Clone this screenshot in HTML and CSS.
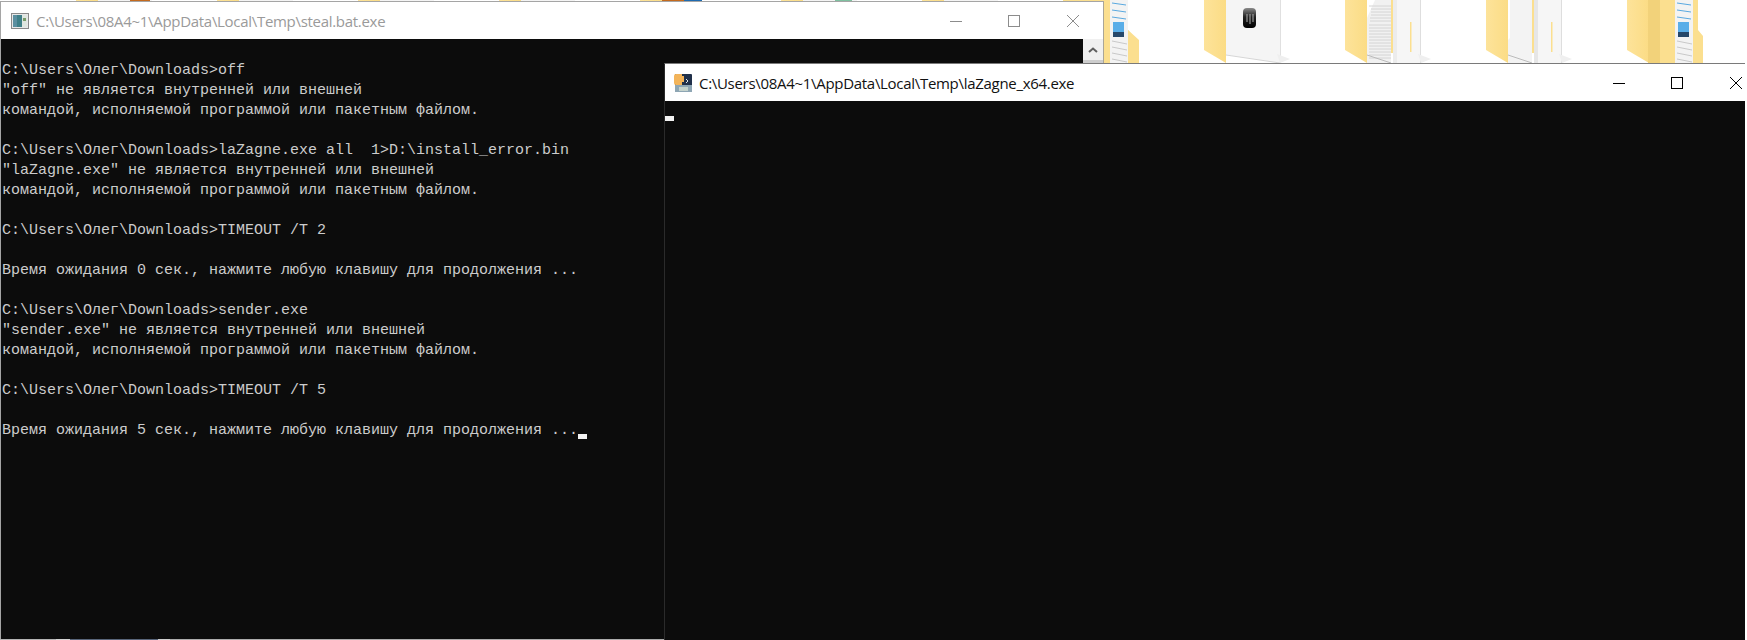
FILE: index.html
```html
<!DOCTYPE html>
<html lang="ru">
<head>
<meta charset="utf-8">
<title>steal.bat.exe</title>
<link rel="stylesheet" href="styles.css">
</head>
<body>
<svg class="defs" width="0" height="0" aria-hidden="true">
  <defs>
    <linearGradient id="flap" x1="0" x2="1" y1="0" y2="0"><stop offset="0" stop-color="#fde39a"/><stop offset="1" stop-color="#fbdc85"/></linearGradient>
    <linearGradient id="ic" x1="0" x2="0" y1="0" y2="1"><stop offset="0" stop-color="#8a8a8a"/><stop offset=".45" stop-color="#222"/><stop offset="1" stop-color="#000"/></linearGradient>
    <symbol id="flapshape" viewBox="0 0 141 63">
      <path d="M0 0V50L22 63V0Z" fill="url(#flap)"/>
    </symbol>
    <symbol id="shadow" viewBox="0 0 141 63">
      <path d="M76 63L86 59 73 54Z" fill="#efefef"/>
    </symbol>
  </defs>
</svg>
<main class="desktop">
  <div class="folders">
    <svg class="folder" viewBox="0 0 141 63"><use href="#flapshape"/><rect x="22" width="54" height="63" fill="#f4f4f4"/><rect x="54" width="20" height="2" fill="#c46a1e"/></svg>
    <svg class="folder" viewBox="0 0 141 63"><use href="#flapshape"/><rect x="22" width="54" height="63" fill="#f4f4f4"/></svg>
    <svg class="folder" viewBox="0 0 141 63"><use href="#flapshape"/><rect x="22" width="54" height="63" fill="#f4f4f4"/></svg>
    <svg class="folder" viewBox="0 0 141 63"><use href="#flapshape"/><rect x="22" width="54" height="63" fill="#f4f4f4"/></svg>
    <svg class="folder" viewBox="0 0 141 63"><use href="#flapshape"/><rect x="22" width="22" height="2" fill="#c46a1e"/><rect x="44" width="18" height="2" fill="#1f6bb0"/></svg>
    <svg class="folder" viewBox="0 0 141 63"><use href="#flapshape"/><rect x="22" width="54" height="63" fill="#f4f4f4"/><rect x="54" width="17" height="2" fill="#7fc0a0"/></svg>
    <svg class="folder" viewBox="0 0 141 63"><use href="#flapshape"/><rect x="22" width="54" height="63" fill="#f4f4f4"/></svg>

    <svg class="folder" viewBox="0 0 141 63">
      <path d="M0 0V63H70V36L65 30V0Z" fill="#fbdf8f"/>
      <path d="M65 0V30L76 40V63H65Z" fill="#fbdf8f"/>
      <rect x="47" width="18" height="63" fill="#f3f3f3"/>
      <g fill="none" stroke-width="1">
        <path d="M49 3L63 5M49 10L63 12M49 17L63 19" stroke="#5aa9e0"/>
        <path d="M49 41L64 44M49 47L64 50M49 53L64 56M49 59L64 62" stroke="#c9c9c9"/>
      </g>
      <rect x="50" y="22" width="11" height="10" fill="#5aaee8"/>
      <rect x="50" y="32" width="11" height="5" fill="#27486a"/>
      <path d="M40 0V63H47V0Z" fill="#fbdf8f"/>
    </svg>

    <svg class="folder" viewBox="0 0 141 63">
      <use href="#flapshape"/>
      <path d="M22 0H76V63L22 55Z" fill="#f5f5f5"/>
      <path d="M22 55L76 63" stroke="#d6d6d6"/>
      <path d="M76.500 0V63" stroke="#e0e0e0"/>
      <use href="#shadow"/>
      <rect x="39" y="8" width="13" height="20" rx="4" fill="url(#ic)"/>
      <path d="M43 14V22M46 14V24M49 14V22" stroke="#b0b0b0" stroke-width="1"/>
    </svg>

    <svg class="folder" viewBox="0 0 141 63">
      <use href="#flapshape"/>
      <path d="M22 18L30 0H46V63H22Z" fill="#f1f1f1"/>
      <path d="M24 25H46M24 28H46M24 31H46M24 34H46M24 37H46M24 40H46M24 43H46M24 46H46M24 49H46M24 52H46M24 55H46M24 58H46" stroke="#d4d4d4"/>
      <path d="M24 6H46M26 9H46M26 12H46M26 15H46M25 18H46M25 21H46" stroke="#d4d4d4"/>
      <path d="M22 55L46 63" stroke="#bbb"/>
      <rect x="46" width="2" height="53" fill="#fbdf8f"/>
      <rect x="48" width="4" height="63" fill="#ececec"/>
      <rect x="52" width="24" height="63" fill="#f6f6f6"/>
      <rect x="65" y="22" width="1.500" height="30" fill="#fbdf8f"/>
      <rect x="75" width="1" height="63" fill="#dedede"/>
      <use href="#shadow"/>
    </svg>

    <svg class="folder" viewBox="0 0 141 63">
      <use href="#flapshape"/>
      <path d="M22 40L24 38V0H46V63H22Z" fill="#f3f3f3"/>
      <path d="M22 55L46 63" stroke="#bbb"/>
      <rect x="46" width="2" height="53" fill="#fbdf8f"/>
      <rect x="48" width="4" height="63" fill="#e6e6e6"/>
      <rect x="52" width="24" height="63" fill="#f6f6f6"/>
      <rect x="65" y="22" width="1.500" height="30" fill="#fbdf8f"/>
      <rect x="75" width="1" height="63" fill="#dedede"/>
      <use href="#shadow"/>
    </svg>

    <svg class="folder" viewBox="0 0 141 63">
      <path d="M0 0V50L22 63V0Z" fill="url(#flap)"/>
      <rect x="21" width="12" height="63" fill="#f2d27a"/>
      <rect x="33" width="15" height="63" fill="#fbdf8f"/>
      <rect x="48" width="18" height="63" fill="#f3f3f3"/>
      <g fill="none" stroke-width="1">
        <path d="M50 3L64 5M50 10L64 12M50 17L64 19" stroke="#5aa9e0"/>
        <path d="M50 41L65 44M50 47L65 50M50 53L65 56M50 59L65 62" stroke="#c9c9c9"/>
      </g>
      <rect x="51" y="22" width="11" height="10" fill="#5aaee8"/>
      <rect x="51" y="32" width="11" height="5" fill="#27486a"/>
      <path d="M66 0H71V30L76 36V63H66Z" fill="#fbdf8f"/>
    </svg>
  </div>

  <div class="taskstrip">
    <span class="ts ts-a"></span><span class="ts ts-b"></span><span class="ts ts-c"></span><span class="ts ts-d"></span><span class="ts ts-e"></span>
  </div>

  <section class="window window-back">
    <header class="titlebar titlebar-back">
      <svg class="appicon" viewBox="0 0 18 16">
        <rect x="0.500" y="0.500" width="17" height="15" fill="#e8e8e8" stroke="#8a8a8a"/>
        <rect x="2" y="2" width="9" height="12" fill="#3f7f88"/>
        <rect x="2" y="2" width="4" height="12" fill="#5b8fa0"/>
        <rect x="11" y="2" width="5" height="12" fill="#dfe6e0"/>
        <rect x="12" y="5" width="3" height="3" fill="#7a9c6a"/>
      </svg>
      <span class="title">C:\Users\08A4~1\AppData\Local\Temp\steal.bat.exe</span>
      <div class="controls controls-back">
        <svg viewBox="0 0 12 12"><path d="M0 6.500H12"/></svg>
        <svg viewBox="0 0 12 12"><rect x="0.500" y="0.500" width="11" height="11"/></svg>
        <svg viewBox="0 0 12 12"><path d="M0 0L12 12M12 0L0 12"/></svg>
      </div>
    </header>
    <div class="body-back">
<pre class="console console-back">

C:\Users\Олег\Downloads&gt;off
"off" не является внутренней или внешней
командой, исполняемой программой или пакетным файлом.

C:\Users\Олег\Downloads&gt;laZagne.exe all  1&gt;D:\install_error.bin
"laZagne.exe" не является внутренней или внешней
командой, исполняемой программой или пакетным файлом.

C:\Users\Олег\Downloads&gt;TIMEOUT /T 2

Время ожидания 0 сек., нажмите любую клавишу для продолжения ...

C:\Users\Олег\Downloads&gt;sender.exe
"sender.exe" не является внутренней или внешней
командой, исполняемой программой или пакетным файлом.

C:\Users\Олег\Downloads&gt;TIMEOUT /T 5

Время ожидания 5 сек., нажмите любую клавишу для продолжения ...<span class="cursor"></span></pre>
      <div class="scrollbar">
        <div class="scroll-btn"><svg viewBox="0 0 10 6"><path d="M1 5L5 1.500 9 5"/></svg></div>
        <div class="scroll-thumb"></div>
      </div>
    </div>
  </section>

  <section class="window window-front">
    <header class="titlebar titlebar-front">
      <svg class="appicon appicon-front" viewBox="0 0 18 20">
        <rect x="1" y="1" width="17" height="18" rx="1" fill="#20304a"/>
        <rect x="1" y="12" width="17" height="7" fill="#8ea6b4"/>
        <rect x="5" y="14" width="9" height="4" fill="#c4d2cc"/>
        <path d="M0 3Q0 1 2 1H8V3H10V9H8V12H2Q0 12 0 10Z" fill="#f3b45a"/>
        <path d="M12 6L14 8 12 10" stroke="#dfe6ee" fill="none"/>
      </svg>
      <span class="title">C:\Users\08A4~1\AppData\Local\Temp\laZagne_x64.exe</span>
      <div class="controls controls-front">
        <svg viewBox="0 0 12 12"><path d="M0 6.500H12"/></svg>
        <svg viewBox="0 0 12 12"><rect x="0.500" y="0.500" width="11" height="11"/></svg>
        <svg viewBox="0 0 12 12"><path d="M0 0L12 12M12 0L0 12"/></svg>
      </div>
    </header>
    <pre class="console console-front"><span class="cursor"></span></pre>
  </section>
</main>
</body>
</html>
```

FILE: styles.css
```css
html, body {
  margin: 0;
  padding: 0;
  background: #fff;
}

.defs {
  position: absolute;
}

.desktop {
  position: relative;
  width: 1747px;
  height: 640px;
  overflow: hidden;
  background: #fff;
}

.folders {
  display: flex;
  padding-left: 76px;
}

.folder {
  flex: 0 0 141px;
  width: 141px;
  height: 63px;
  display: block;
}

.taskstrip {
  position: absolute;
  left: 0;
  right: 0;
  bottom: 0;
  height: 1px;
  display: flex;
  width: 665px;
}

.ts-a { width: 56px; background: #b4b4b4; }
.ts-b { width: 14px; background: #d4d4d4; }
.ts-c { width: 88px; background: #59657a; }
.ts-d { width: 12px; background: #d0d0d0; }
.ts-e { flex: 1; background: #adadad; }

.window {
  position: absolute;
  box-sizing: border-box;
  display: flex;
  flex-direction: column;
}

.window-back {
  left: 0;
  top: 1px;
  width: 1104px;
  height: 638px;
  border: 1px solid #aaa698;
  border-top-color: #a5a5a5;
  border-left-color: #a5a5a5;
  border-bottom: 0;
  background: #fff;
}

.window-front {
  left: 664px;
  top: 63px;
  width: 1081px;
  height: 577px;
  border-top: 1px solid #7a7a7a;
  border-left: 1px solid #2b2b2b;
  background: #fff;
}

.titlebar {
  display: flex;
  align-items: center;
  flex: none;
  background: #fff;
  font-family: "Open Sans", "Liberation Sans", sans-serif;
  font-size: 15px;
  white-space: nowrap;
}

.titlebar-back {
  height: 37px;
  padding-left: 10px;
  color: #9a9a9a;
}

.titlebar-front {
  height: 37px;
  padding-left: 9px;
  color: #111;
}

.appicon {
  width: 18px;
  height: 16px;
  flex: none;
  margin-right: 7px;
}

.appicon-front {
  height: 20px;
  margin-right: 7px;
}

.title {
  flex: 1;
  letter-spacing: -0.3px;
}

.controls {
  display: flex;
  flex: none;
  align-items: center;
  gap: 46px;
}

.controls svg {
  width: 12px;
  height: 12px;
  display: block;
  fill: none;
  stroke-width: 1;
}

.controls svg:last-child {
  margin-left: 1px;
}

.controls-back {
  padding-right: 24px;
}

.controls-back svg {
  stroke: #8c8c8c;
}

.controls-front {
  padding-right: 3px;
}

.controls-front svg {
  stroke: #000;
}

.body-back {
  flex: 1;
  display: flex;
  min-height: 0;
}

.console {
  margin: 0;
  flex: 1;
  background: #0c0c0c;
  color: #cccccc;
  font-family: "Liberation Mono", "DejaVu Sans Mono", monospace;
  font-size: 15px;
  line-height: 20px;
  overflow: hidden;
}

.console-back {
  padding: 2px 0 0 1px;
}

.cursor {
  display: inline-block;
  width: 9px;
  height: 20px;
  vertical-align: top;
  background: linear-gradient(transparent 15px, #f2f2f2 15px);
}

.console-back .cursor {
  background: linear-gradient(transparent 13px, #f2f2f2 13px, #f2f2f2 18px, transparent 18px);
}

.scrollbar {
  flex: none;
  width: 20px;
  background: #f0f0f0;
}

.scroll-btn {
  height: 21px;
  display: flex;
  align-items: center;
  justify-content: center;
}

.scroll-btn svg {
  width: 10px;
  height: 6px;
  fill: none;
  stroke: #606060;
  stroke-width: 2;
}

.scroll-thumb {
  height: 3px;
  background: #cdcdcd;
}
```
